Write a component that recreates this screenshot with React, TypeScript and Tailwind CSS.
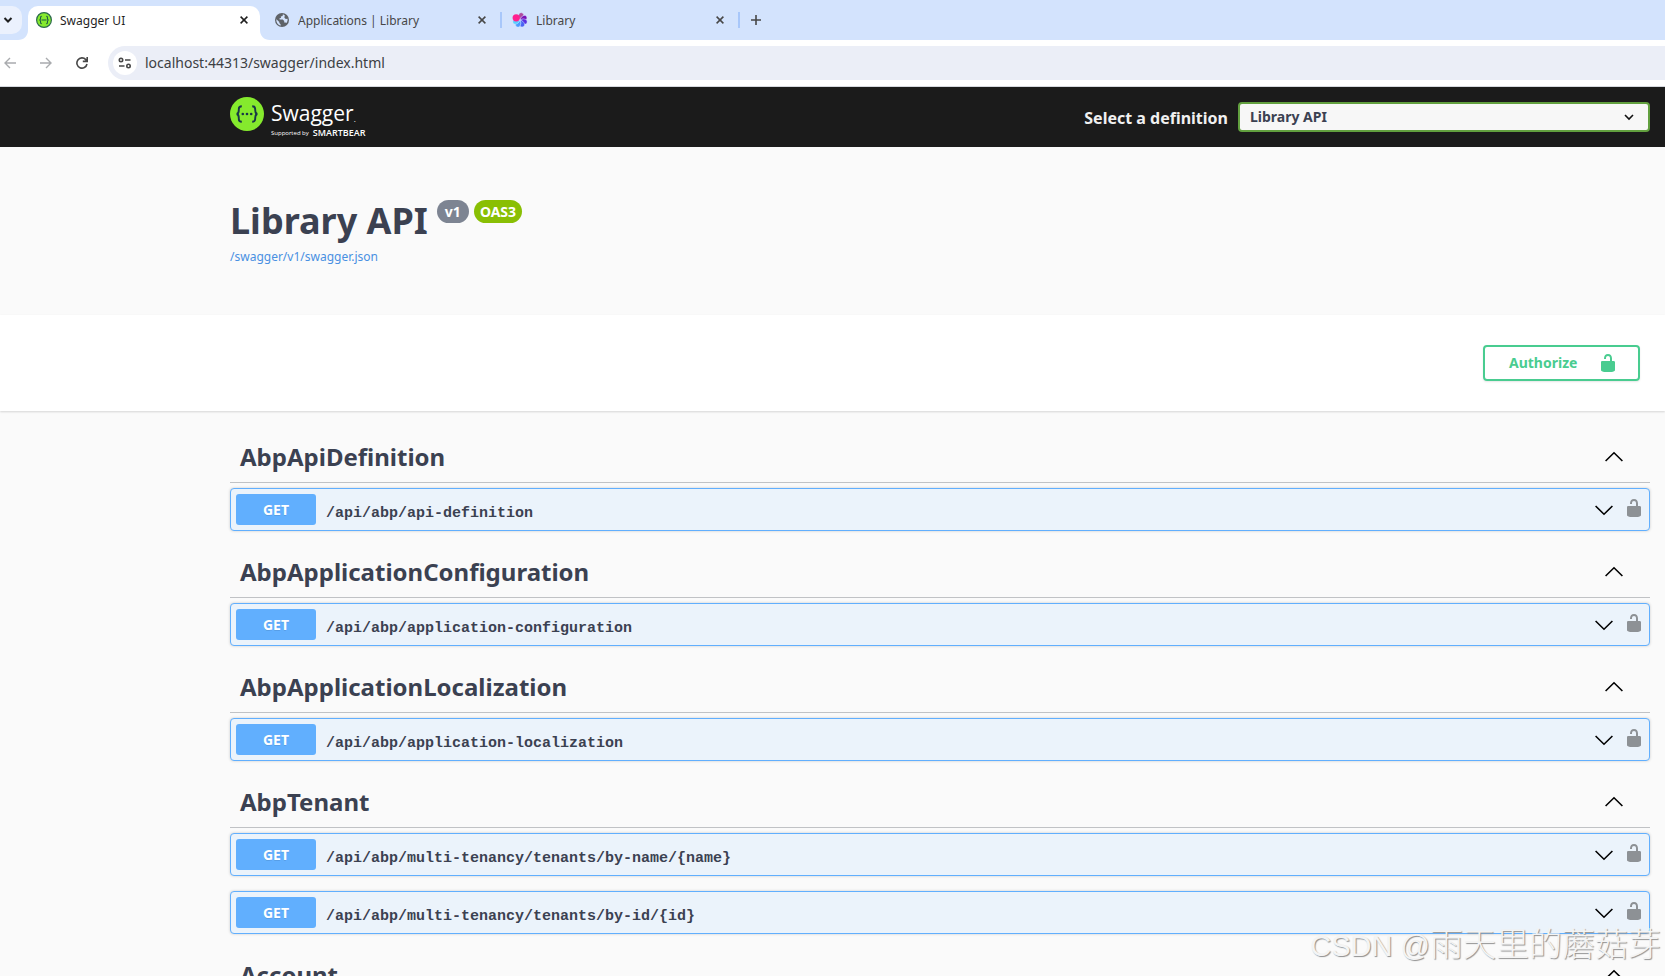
import { useState } from "react";

type Operation = {
  method: string;
  path: string;
};

type Tag = {
  name: string;
  operations: Operation[];
};

const TAGS: Tag[] = [
  {
    name: "AbpApiDefinition",
    operations: [{ method: "GET", path: "/api/abp/api-definition" }],
  },
  {
    name: "AbpApplicationConfiguration",
    operations: [{ method: "GET", path: "/api/abp/application-configuration" }],
  },
  {
    name: "AbpApplicationLocalization",
    operations: [{ method: "GET", path: "/api/abp/application-localization" }],
  },
  {
    name: "AbpTenant",
    operations: [
      { method: "GET", path: "/api/abp/multi-tenancy/tenants/by-name/{name}" },
      { method: "GET", path: "/api/abp/multi-tenancy/tenants/by-id/{id}" },
    ],
  },
  { name: "Account", operations: [] },
];

const PETALS = [
  { angle: 15, color: "#b04aa0" },
  { angle: 65, color: "#7a12b8" },
  { angle: 110, color: "#5a2fe0" },
  { angle: 155, color: "#4a63f5" },
  { angle: 205, color: "#4a9bff" },
  { angle: 250, color: "#56d0ff" },
];

function SwaggerFavicon() {
  return (
    <svg className="size-4 shrink-0" viewBox="0 0 16 16" aria-hidden="true">
      <circle cx="8" cy="8" r="7.4" fill="#85ea2d" stroke="#2c6a4c" strokeWidth="1.2" />
      <path
        d="M5.8 4.2c-1.3 0-1.2.7-1.2 1.9 0 1.1-.2 1.7-1.1 1.9.9.2 1.1.8 1.1 1.9 0 1.2-.1 1.9 1.2 1.9M10.2 4.2c1.3 0 1.2.7 1.2 1.9 0 1.1.2 1.7 1.1 1.9-.9.2-1.1.8-1.1 1.9 0 1.2.1 1.9-1.2 1.9M5.5 8h5"
        fill="none"
        stroke="#1d5a44"
        strokeWidth="1.1"
      />
    </svg>
  );
}

function GlobeIcon() {
  return (
    <svg className="size-4 shrink-0" viewBox="0 0 16 16" aria-hidden="true">
      <circle cx="8" cy="8" r="7" fill="#5f6368" />
      <path
        d="M8.9 2.2 8.6 4 6.8 4.4 7 6 5.5 6.3 5.6 7.6H8.8L10.2 9v1.4h1.3l.9.6c1-1.2 1.4-2.6 1.1-4.2L11.8 7 10.4 5.7 10.8 3.2ZM2.3 7.2C2 10 3.7 12.7 6.6 13.7V12.2L5.3 11V9.9L2.7 7.4Z"
        fill="#d3e3fd"
      />
    </svg>
  );
}

function FlowerIcon() {
  return (
    <svg className="size-4 shrink-0" viewBox="0 0 16 16" aria-hidden="true">
      {PETALS.map((petal) => (
        <path
          key={petal.angle}
          d="M8 8C6 6.4 4.900 4 5.700 2 6.400.3 9 .1 10 1.600 10.600 2.700 10.100 3.600 9.200 4.200 8.300 4.900 8 6.200 8 8Z"
          fill={petal.color}
          stroke="#d3e3fd"
          strokeWidth=".4"
          transform={`rotate(${petal.angle} 8 8)`}
        />
      ))}
      <circle cx="4.2" cy="5.8" r="3.6" fill="#ff1f8f" />
    </svg>
  );
}

function CloseIcon() {
  return (
    <svg className="size-2" viewBox="0 0 8 8" aria-hidden="true">
      <path d="m.6.6 6.8 6.8M7.4.6.6 7.4" fill="none" stroke="currentColor" strokeWidth="1.5" />
    </svg>
  );
}

function ArrowIcon({ className }: { className?: string }) {
  return (
    <svg className={className} width="20" height="20" viewBox="0 0 20 20" aria-hidden="true">
      <path d="m1.6 6 8.4 8.2L18.4 6" fill="none" stroke="currentColor" strokeWidth="1.6" />
    </svg>
  );
}

function UnlockIcon() {
  return (
    <svg width="20" height="20" viewBox="0 0 20 20" aria-hidden="true">
      <path
        fill="currentColor"
        d="M15.8 8H14V5.6C14 2.703 12.665 1 10 1 7.334 1 6 2.703 6 5.6V6h2v-.801C8 3.754 8.797 3 10 3c1.203 0 2 .754 2 2.199V8H4c-.553 0-1 .646-1 1.199V17c0 .549.428 1.139.951 1.307l1.197.387C5.672 18.861 6.55 19 7.1 19h5.8c.549 0 1.428-.139 1.951-.307l1.196-.387c.524-.167.953-.757.953-1.306V9.199C17 8.646 16.352 8 15.8 8z"
      />
    </svg>
  );
}

function BrowserTab({ icon, title }: { icon: React.ReactNode; title: string }) {
  return (
    <div className="flex h-4 w-[238px] items-center gap-2 border-r-2 border-[#a8c7fa] px-2.5 text-[#474747]">
      {icon}
      <span className="flex-1 truncate pt-0.5 text-xs">{title}</span>
      <button type="button" aria-label={`Close ${title}`} className="p-1">
        <CloseIcon />
      </button>
    </div>
  );
}

function BrowserChrome() {
  return (
    <header className="border-b border-[#d5d8de] bg-white">
      <div className="flex h-10 items-center bg-[#d3e3fd]">
        <button
          type="button"
          aria-label="Search tabs"
          className="flex h-7 w-[22px] items-center justify-center rounded-r-[10px] bg-[#ebf1fd] pr-1.5"
        >
          <svg width="10" height="8" viewBox="0 0 10 8" aria-hidden="true">
            <path d="m1.5 2 3.5 3.5L8.5 2" fill="none" stroke="#1f1f1f" strokeWidth="2" />
          </svg>
        </button>
        <svg className="-ml-1 shrink-0 self-end" width="10" height="10" viewBox="0 0 10 10" aria-hidden="true">
          <path d="M10 0v10H0C6 10 10 6 10 0z" fill="#fff" />
        </svg>
        <div className="flex h-[34px] w-[232px] items-center gap-2 self-end rounded-t-[10px] bg-white px-2 pb-1.5 text-[#1f1f1f]">
          <SwaggerFavicon />
          <span className="flex-1 truncate pt-0.5 text-xs">Swagger UI</span>
          <button type="button" aria-label="Close Swagger UI" className="p-1">
            <CloseIcon />
          </button>
        </div>
        <svg className="-mr-1.5 shrink-0 self-end" width="10" height="10" viewBox="0 0 10 10" aria-hidden="true">
          <path d="M0 0v10h10C4 10 0 6 0 0z" fill="#fff" />
        </svg>
        <BrowserTab icon={<GlobeIcon />} title="Applications | Library" />
        <BrowserTab icon={<FlowerIcon />} title="Library" />
        <button type="button" aria-label="New tab" className="p-2.5 text-[#474747]">
          <svg width="12" height="12" viewBox="0 0 12 12" aria-hidden="true">
            <path d="M6 1v10M1 6h10" fill="none" stroke="currentColor" strokeWidth="1.6" />
          </svg>
        </button>
      </div>

      <div className="flex h-[46px] items-center">
        <div className="flex w-[108px] items-center gap-6 pl-1">
          <button type="button" aria-label="Back" className="text-[#a9abae]">
            <svg width="12" height="12" viewBox="0 0 12 12" aria-hidden="true">
              <path d="M12 6H1M6 1 1 6l5 5" fill="none" stroke="currentColor" strokeWidth="1.4" />
            </svg>
          </button>
          <button type="button" aria-label="Forward" className="text-[#a9abae]">
            <svg width="12" height="12" viewBox="0 0 12 12" aria-hidden="true">
              <path d="M0 6h11M6 1l5 5-5 5" fill="none" stroke="currentColor" strokeWidth="1.4" />
            </svg>
          </button>
          <button type="button" aria-label="Reload" className="text-[#474747]">
            <svg width="12" height="12" viewBox="0 0 12 12" aria-hidden="true">
              <path
                d="M11 7A5.1 5.1 0 1 1 9.8 2.6L11 4M11.2 0v4.4H6.8"
                fill="none"
                stroke="currentColor"
                strokeWidth="1.6"
              />
            </svg>
          </button>
        </div>
        <div className="flex h-[34px] flex-1 items-center gap-2 rounded-l-full bg-[#ebeef7] pl-[5px]">
          <button
            type="button"
            aria-label="View site information"
            className="flex size-6 items-center justify-center rounded-full bg-white"
          >
            <svg width="14" height="12" viewBox="0 0 14 12" aria-hidden="true">
              <g fill="none" stroke="#474747" strokeWidth="1.6">
                <circle cx="3" cy="3" r="1.7" />
                <path d="M7 3h5.5M1 9h5.5" />
                <circle cx="10.5" cy="9" r="1.7" />
              </g>
            </svg>
          </button>
          <input
            aria-label="Address"
            defaultValue="localhost:44313/swagger/index.html"
            className="flex-1 bg-transparent text-sm text-[#3c4043] outline-none"
          />
        </div>
      </div>
    </header>
  );
}

function SwaggerLogo() {
  return (
    <a href="#" aria-label="Swagger" className="flex items-start gap-[7px]">
      <svg width="34" height="34" viewBox="0 0 34 34" aria-hidden="true">
        <circle cx="17" cy="17" r="17" fill="#85ea2d" />
        <path
          d="M11.8 9.2c-2.6 0-3 .9-3 2.8 0 2.6.3 4.4-2.1 5 2.4.6 2.1 2.4 2.1 5 0 1.9.4 2.8 3 2.8M22.2 9.2c2.6 0 3 .9 3 2.8 0 2.6-.3 4.4 2.1 5-2.4.6-2.1 2.4-2.1 5 0 1.9-.4 2.8-3 2.8"
          fill="none"
          stroke="#173647"
          strokeWidth="1.9"
        />
        <g fill="#173647">
          <circle cx="12.8" cy="17" r="1.3" />
          <circle cx="17" cy="17" r="1.3" />
          <circle cx="21.2" cy="17" r="1.3" />
        </g>
      </svg>
      <span className="flex flex-col font-['Open_Sans',sans-serif] text-white">
        <span className="flex items-end text-[21px] leading-8">
          Swagger<span className="text-[8px] leading-5">.</span>
        </span>
        <span className="flex items-center gap-1 text-[6px] leading-2">
          Supported by <b className="text-[9px] font-semibold">SMARTBEAR</b>
        </span>
      </span>
    </a>
  );
}

function OperationRow({ operation }: { operation: Operation }) {
  return (
    <div className="flex items-center rounded border border-[#61affe] bg-[#ebf3fb] p-[5px] shadow-[0_0_3px_rgba(0,0,0,0.19)]">
      <button type="button" className="flex flex-1 items-center gap-2.5 text-left">
        <span className="w-20 rounded-[3px] bg-[#61affe] text-center text-sm leading-[31px] font-bold text-white [text-shadow:0_1px_0_rgba(0,0,0,0.1)]">
          {operation.method}
        </span>
        <span className="flex-1 pt-2 font-['Liberation_Mono',monospace] text-[15px] leading-5 font-bold text-[#3b4151]">
          {operation.path}
        </span>
        <ArrowIcon className="text-black" />
      </button>
      <button type="button" aria-label="Authorization" className="pb-[3px] pl-2.5 text-[#8d9195]">
        <UnlockIcon />
      </button>
    </div>
  );
}

function TagSection({ tag }: { tag: Tag }) {
  const [open, setOpen] = useState(true);

  return (
    <section>
      <h3 className="border-b border-[#c0c2c5]">
        <button
          type="button"
          aria-expanded={open}
          onClick={() => setOpen(!open)}
          className="flex h-[51px] w-full items-center justify-between pr-[26px] pl-2.5 text-2xl font-bold"
        >
          {tag.name}
          <ArrowIcon className={open ? "rotate-180 text-black" : "text-black"} />
        </button>
      </h3>
      {open && (
        <div className="flex flex-col gap-[15px] pt-[5px] pb-[15px]">
          {tag.operations.map((operation) => (
            <OperationRow key={operation.path} operation={operation} />
          ))}
        </div>
      )}
    </section>
  );
}

export default function App() {
  return (
    <div className="relative h-screen overflow-hidden bg-[#fafafa] font-['Noto_Sans','Open_Sans',sans-serif] text-[#3b4151]">
      <BrowserChrome />

      <div className="flex h-15 items-center justify-between bg-[#1b1b1b] pr-[15px] pl-[230px]">
        <SwaggerLogo />
        <div className="flex items-center gap-2.5">
          <label htmlFor="definition" className="pt-0.5 text-base font-bold text-[#f0f0f0]">
            Select a definition
          </label>
          <div className="relative flex w-[412px]">
            <select
              id="definition"
              className="h-[30px] w-full appearance-none rounded border-2 border-[#62a03f] bg-[#f7f7f7] px-2.5 text-sm font-bold text-[#3b4151]"
            >
              <option>Library API</option>
            </select>
            <svg
              className="pointer-events-none absolute top-2.5 right-4"
              width="10"
              height="10"
              viewBox="0 0 10 10"
              aria-hidden="true"
            >
              <path d="m1 3 4 4 4-4" fill="none" stroke="#111" strokeWidth="1.6" />
            </svg>
          </div>
        </div>
      </div>

      <div className="pt-[50px] pr-[15px] pb-[50px] pl-[230px]">
        <div className="flex items-start gap-[5px] pb-[3px]">
          <h1 className="mr-1 text-4xl leading-12 font-bold">Library API</h1>
          <span className="mt-[3px] rounded-full bg-[#7d8492] px-2 text-sm leading-[23px] font-bold text-white">v1</span>
          <span className="mt-[3px] rounded-full bg-[#89bf04] px-1.5 text-sm leading-[23px] font-bold text-white">
            OAS3
          </span>
        </div>
        <a href="/swagger/v1/swagger.json" className="block text-xs leading-[17px] text-[#4990e2]">
          /swagger/v1/swagger.json
        </a>
      </div>

      <div className="flex justify-end bg-white py-[30px] pr-[25px] shadow-[0_1px_2px_rgba(0,0,0,0.15)]">
        <button
          type="button"
          className="flex h-9 w-[157px] items-center justify-between rounded border-2 border-[#49cc90] pr-5 pl-6 text-sm font-bold text-[#49cc90] shadow-[0_1px_2px_rgba(0,0,0,0.1)]"
        >
          Authorize
          <UnlockIcon />
        </button>
      </div>

      <main className="pt-5 pr-[15px] pl-[230px]">
        {TAGS.map((tag) => (
          <TagSection key={tag.name} tag={tag} />
        ))}
      </main>

      <div className="pointer-events-none absolute right-1 bottom-1.5 font-['Liberation_Sans','Noto_Sans_CJK_SC',sans-serif] text-[33px] leading-12 font-light text-[#f4f4f4] [text-shadow:1px_1px_1px_#8f8f8f]">
        <span className="text-[29px]">CSDN @</span>雨天里的蘑菇芽
      </div>
    </div>
  );
}
